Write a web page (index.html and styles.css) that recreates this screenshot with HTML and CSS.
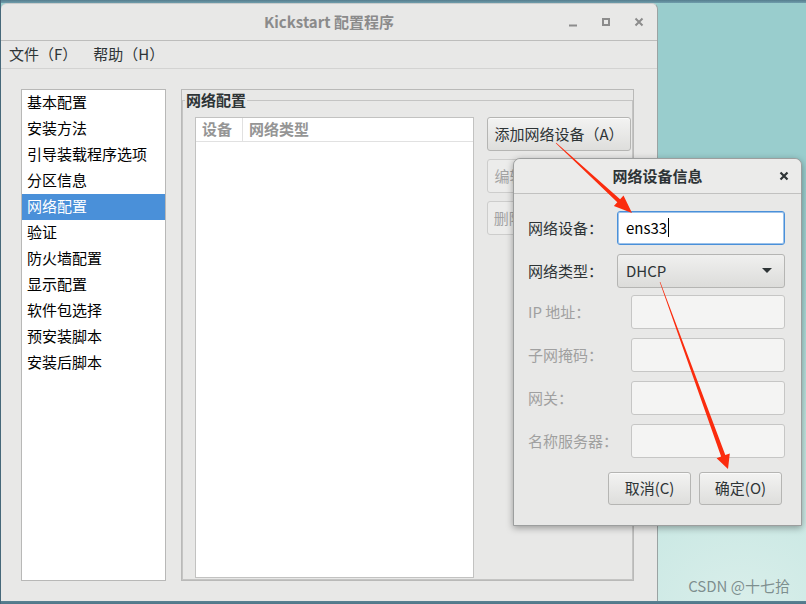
FILE: index.html
```html
<!DOCTYPE html>
<html lang="zh-CN">
<head>
<meta charset="utf-8">
<title>Kickstart 配置程序</title>
<link rel="stylesheet" href="styles.css">
</head>
<body>
<div class="desktop">
  <div class="window main-window">
    <div class="titlebar">
      <span></span>
      <span class="title">Kickstart 配置程序</span>
      <div class="wm-controls">
        <svg class="wm-btn" width="16" height="16" viewBox="0 0 16 16"><path d="M4 11.5h8" stroke="#8c8c8c" stroke-width="2" fill="none"/></svg>
        <svg class="wm-btn" width="16" height="16" viewBox="0 0 16 16"><rect x="5" y="5" width="6" height="6" stroke="#8c8c8c" stroke-width="2" fill="none"/></svg>
        <svg class="wm-btn" width="16" height="16" viewBox="0 0 16 16"><path d="M4.5 4.5l7 7M11.5 4.5l-7 7" stroke="#8c8c8c" stroke-width="2" fill="none"/></svg>
      </div>
    </div>
    <div class="menubar">
      <span class="menu-item">文件（F）</span>
      <span class="menu-item">帮助（H）</span>
    </div>
    <div class="content">
      <ul class="sidebar">
        <li>基本配置</li>
        <li>安装方法</li>
        <li>引导装载程序选项</li>
        <li>分区信息</li>
        <li class="selected">网络配置</li>
        <li>验证</li>
        <li>防火墙配置</li>
        <li>显示配置</li>
        <li>软件包选择</li>
        <li>预安装脚本</li>
        <li>安装后脚本</li>
      </ul>
      <div class="panel">
        <fieldset class="frame">
          <legend>网络配置</legend>
          <div class="frame-body">
            <div class="table">
              <div class="table-head">
                <span class="th th-dev">设备</span>
                <span class="th">网络类型</span>
              </div>
            </div>
            <div class="actions">
              <button class="btn">添加网络设备（A）</button>
              <button class="btn" disabled>编辑网络设备（E）</button>
              <button class="btn" disabled>删除网络设备（D）</button>
            </div>
          </div>
        </fieldset>
      </div>
    </div>
  </div>

  <div class="window dialog">
    <div class="dialog-titlebar">
      <span></span>
      <span class="dialog-title">网络设备信息</span>
      <svg class="dialog-close" width="16" height="16" viewBox="0 0 16 16"><path d="M4.5 4.5l7 7M11.5 4.5l-7 7" stroke="#2e3436" stroke-width="2.2" fill="none"/></svg>
    </div>
    <div class="dialog-body">
      <div class="form-group group-main">
        <label class="field-label">网络设备：</label>
        <div class="entry focused"><span>ens33</span><span class="caret"></span></div>
        <label class="field-label">网络类型：</label>
        <div class="combo"><span>DHCP</span><span class="combo-arrow"></span></div>
      </div>
      <div class="form-group group-static">
        <label class="field-label disabled">IP 地址：</label>
        <div class="entry disabled"></div>
        <label class="field-label disabled">子网掩码：</label>
        <div class="entry disabled"></div>
        <label class="field-label disabled">网关：</label>
        <div class="entry disabled"></div>
        <label class="field-label disabled">名称服务器：</label>
        <div class="entry disabled"></div>
      </div>
      <div class="dialog-footer">
        <button class="btn dialog-btn">取消(C)</button>
        <button class="btn dialog-btn">确定(O)</button>
      </div>
    </div>
  </div>

  <svg class="annotations" width="806" height="604" viewBox="0 0 806 604">
    <polygon points="555.8,143.2 617.3,202.3 613.9,206.0 632,213 623.5,195.6 620.1,199.3 556.2,142.8" fill="#fb2c0e"/>
    <polygon points="659.7,282.1 721.1,456.6 716.6,458.2 728,469 729.8,453.4 725.3,455.0 660.3,281.9" fill="#fb2c0e"/>
  </svg>

  <div class="watermark">CSDN @十七拾</div>
</div>
</body>
</html>
```

FILE: styles.css
```css
* { box-sizing: border-box; }

html, body { margin: 0; padding: 0; }

body {
  width: 806px;
  height: 604px;
  overflow: hidden;
  font-family: "Noto Sans CJK SC", "DejaVu Sans", sans-serif;
  font-size: 15px;
  line-height: 18px;
  color: #2e3436;
}

.desktop {
  position: relative;
  width: 806px;
  height: 604px;
  background:
    linear-gradient(to right, #46687a 0, #46687a 1px, transparent 1px),
    linear-gradient(to bottom, #557d8e 0, #6f9dab 3px, transparent 3px),
    linear-gradient(to top, #4f7688 0, #5a8293 3px, transparent 3px),
    radial-gradient(ellipse 520px 420px at 92% 100%, #d9eeea 0%, #bfe4df 45%, #a6d6d4 75%, #99cdcd 100%),
    #99cdcd;
}

.window {
  position: absolute;
  background: #e8e8e7;
}

/* ---------- main window ---------- */
.main-window {
  left: 1px;
  top: 3px;
  width: 657px;
  height: 598px;
  border-top: 1px solid #c9cccc;
  border-right: 1px solid #9aa3a3;
  border-radius: 6px 6px 0 0;
  display: flex;
  flex-direction: column;
}

.titlebar {
  height: 37px;
  flex: none;
  border-bottom: 1px solid #bdbdbc;
  display: grid;
  grid-template-columns: 1fr auto 1fr;
  align-items: center;
}

.title {
  font-weight: bold;
  color: #8b8b8b;
}

.wm-controls {
  justify-self: end;
  display: flex;
  gap: 17px;
  margin-right: 10px;
}

.wm-btn { display: block; }

.menubar {
  height: 28px;
  flex: none;
  border-bottom: 1px solid #d3d3d2;
  display: flex;
  align-items: center;
  padding-bottom: 2px;
}

.menu-item {
  padding: 0 8px;
  color: #2e3436;
}

.content {
  flex: 1;
  display: flex;
  gap: 15px;
  padding: 20px 0 20px 20px;
}

.sidebar {
  list-style: none;
  margin: 0;
  padding: 0;
  width: 145px;
  flex: none;
  background: #fff;
  border: 1px solid #b8b8b7;
  color: #000;
}

.sidebar li {
  height: 26px;
  line-height: 24px;
  padding: 0 0 2px 5px;
  white-space: nowrap;
}

.sidebar li.selected {
  background: #4a90d9;
  color: #fff;
}

.panel {
  width: 453px;
  flex: none;
  border: 1px solid #b9b9b8;
  padding-top: 1px;
  display: flex;
  flex-direction: column;
}

.frame {
  flex: 1;
  margin: 0;
  padding: 8px 1px 0 12px;
  border: 1px solid #c4c4c3;
  min-width: 0;
  display: flex;
  flex-direction: column;
}

.frame legend {
  padding: 0 1px 1px;
  margin-left: -10px;
  font-weight: bold;
  color: #2e3436;
  line-height: 17px;
}

.frame-body {
  flex: 1;
  display: flex;
  gap: 13px;
  padding-bottom: 1px;
}

.table {
  width: 279px;
  flex: none;
  background: #fff;
  border: 1px solid #c2c2c1;
}

.table-head {
  height: 24px;
  border-bottom: 1px solid #e1e1e1;
  display: flex;
  align-items: center;
}

.th {
  font-weight: bold;
  color: #959595;
  padding: 0 6px 1px;
  line-height: 22px;
}

.th-dev {
  width: 47px;
  border-right: 1px solid #e1e1e1;
}

.actions {
  width: 144px;
  flex: none;
  display: flex;
  flex-direction: column;
  gap: 8px;
}

.btn {
  height: 34px;
  margin: 0;
  padding: 0 0 2px;
  font-family: inherit;
  font-size: 15px;
  color: #2e3436;
  border: 1px solid #b5b5b3;
  border-radius: 3px;
  background: linear-gradient(to bottom, #f3f3f2, #dededc);
  box-shadow: inset 0 1px 0 #fafafa;
  text-align: center;
  white-space: nowrap;
  overflow: hidden;
}

.btn:disabled {
  color: #a3a3a3;
  background: #ececeb;
  border-color: #cdcdcc;
  box-shadow: none;
}

/* ---------- dialog ---------- */
.dialog {
  left: 513px;
  top: 158px;
  width: 289px;
  height: 368px;
  border: 1px solid #9c9e9e;
  border-radius: 7px 7px 0 0;
  box-shadow: 0 2px 7px rgba(0, 0, 0, 0.35);
  display: flex;
  flex-direction: column;
}

.dialog-titlebar {
  height: 35px;
  flex: none;
  border-bottom: 1px solid #c1c1c0;
  border-radius: 7px 7px 0 0;
  background: #ebebea;
  display: grid;
  grid-template-columns: 1fr auto 1fr;
  align-items: center;
  padding-bottom: 1px;
}

.dialog-title {
  font-weight: bold;
  color: #2e3436;
}

.dialog-close {
  justify-self: end;
  margin-right: 9px;
  display: block;
}

.dialog-body {
  flex: 1;
  padding: 17px 15px 20px 14px;
}

.form-group {
  display: grid;
  row-gap: 9px;
  align-items: center;
}

.group-main { grid-template-columns: 89px 168px; }

.group-static {
  grid-template-columns: 103px 154px;
  margin-top: 7px;
}

.field-label {
  color: #2e3436;
  white-space: nowrap;
  padding-bottom: 1px;
}

.field-label.disabled { color: #a0a0a0; }

.entry {
  height: 34px;
  border: 1px solid #c6c6c5;
  border-radius: 3px;
  background: #f4f4f3;
  display: flex;
  align-items: center;
  padding-left: 8px;
}

.entry.focused {
  background: #fff;
  border-color: #4a90d9;
  box-shadow: inset 0 0 0 1px rgba(74, 144, 217, 0.55);
  color: #000;
  padding-bottom: 1px;
}

.caret {
  display: inline-block;
  width: 1px;
  height: 19px;
  background: #000;
  margin-left: 1px;
}

.combo {
  height: 34px;
  border: 1px solid #b5b5b3;
  border-radius: 3px;
  background: linear-gradient(to bottom, #f0f0ef, #dcdcda);
  display: flex;
  align-items: center;
  justify-content: space-between;
  padding: 0 12px 1px 8px;
  color: #2e3436;
}

.combo-arrow {
  width: 0;
  height: 0;
  border-left: 5px solid transparent;
  border-right: 5px solid transparent;
  border-top: 5px solid #2e3436;
}

.dialog-footer {
  display: flex;
  justify-content: flex-end;
  gap: 8px;
  margin-top: 14px;
  margin-right: 4px;
}

.dialog-btn {
  width: 83px;
  height: 33px;
}

/* ---------- overlays ---------- */
.annotations {
  position: absolute;
  left: 0;
  top: 0;
  pointer-events: none;
}

.watermark {
  position: absolute;
  right: 16px;
  top: 576px;
  color: #7d8f8f;
  font-size: 15px;
  line-height: 20px;
  text-shadow: 0 0 1px rgba(255, 255, 255, 0.4);
}
```
